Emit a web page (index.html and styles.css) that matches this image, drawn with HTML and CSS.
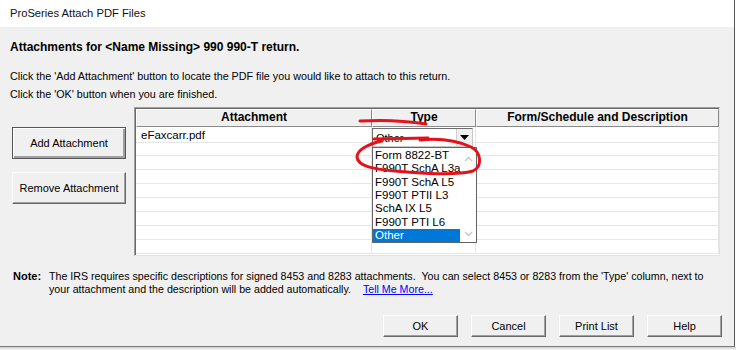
FILE: index.html
```html
<!DOCTYPE html>
<html>
<head>
<meta charset="utf-8">
<link rel="stylesheet" href="styles.css">
</head>
<body>
<div class="window">
  <div class="titlebar">ProSeries Attach PDF Files</div>
  <div class="client">
    <div class="heading">Attachments for &lt;Name Missing&gt; 990 990-T return.</div>
    <div class="instr">Click the 'Add Attachment' button to locate the PDF file you would like to attach to this return.</div>
    <div class="instr">Click the 'OK' button when you are finished.</div>
    <div class="main">
      <div class="sidebtns">
        <div class="btn btn-default side">Add Attachment</div>
        <div class="btn side">Remove Attachment</div>
      </div>
      <div class="grid">
        <div class="ghead">
          <div class="hcell">Attachment</div>
          <div class="hcell">Type</div>
          <div class="hcell">Form/Schedule and Description</div>
        </div>
        <div class="grow first"><div class="gcell">eFaxcarr.pdf</div><div class="gcell"></div><div class="gcell"></div></div>
        <div class="grow"><div class="gcell"></div><div class="gcell"></div><div class="gcell"></div></div>
        <div class="grow"><div class="gcell"></div><div class="gcell"></div><div class="gcell"></div></div>
        <div class="grow"><div class="gcell"></div><div class="gcell"></div><div class="gcell"></div></div>
        <div class="grow"><div class="gcell"></div><div class="gcell"></div><div class="gcell"></div></div>
        <div class="grow"><div class="gcell"></div><div class="gcell"></div><div class="gcell"></div></div>
        <div class="grow"><div class="gcell"></div><div class="gcell"></div><div class="gcell"></div></div>
        <div class="grow"><div class="gcell"></div><div class="gcell"></div><div class="gcell"></div></div>
        <div class="grow"><div class="gcell"></div><div class="gcell"></div><div class="gcell"></div></div>

        <div class="combo">
          <span class="combo-text">Other</span>
          <span class="combo-btn"><svg width="9" height="5" viewBox="0 0 9 5"><path d="M0 0H9L4.5 5Z" fill="#000"/></svg></span>
        </div>
        <div class="droplist">
          <div class="items">
            <div class="item">Form 8822-BT</div>
            <div class="item">F990T SchA L3a</div>
            <div class="item">F990T SchA L5</div>
            <div class="item">F990T PTII L3</div>
            <div class="item">SchA IX L5</div>
            <div class="item">F990T PTI L6</div>
            <div class="item sel">Other</div>
          </div>
          <div class="vscroll">
            <svg width="9" height="6" viewBox="0 0 9 6"><path d="M1 5L4.5 1.5L8 5" fill="none" stroke="#c8c8c8" stroke-width="1.3"/></svg>
            <svg width="9" height="6" viewBox="0 0 9 6"><path d="M1 1L4.5 4.5L8 1" fill="none" stroke="#c8c8c8" stroke-width="1.3"/></svg>
          </div>
        </div>
      </div>
    </div>
    <div class="note">
      <div class="note-label">Note:</div>
      <div class="note-text">The IRS requires specific descriptions for signed 8453 and 8283 attachments.&nbsp; You can select 8453 or 8283 from the 'Type' column, next to<br>your attachment and the description will be added automatically.<span class="link">Tell Me More...</span></div>
    </div>
    <div class="footer">
      <div class="btn foot">OK</div>
      <div class="btn foot">Cancel</div>
      <div class="btn foot">Print List</div>
      <div class="btn foot">Help</div>
    </div>
  </div>
</div>
<div class="below"></div>
<svg class="annot" width="736" height="350" viewBox="0 0 736 350">
  <path d="M360 121 Q395 119 426 124" fill="none" stroke="#e5121b" stroke-width="3" stroke-linecap="round"/>
  <path d="M374 139 L428 138" fill="none" stroke="#e5121b" stroke-width="3" stroke-linecap="round"/>
  <path d="M382 141 C368 144 357 150 357 157 C358 166 372 169 395 171 C420 173 455 176 473 171 C483 166 481 152 471 147 C458 141 440 138 420 140" fill="none" stroke="#e5121b" stroke-width="3" stroke-linecap="round"/>
</svg>
</body>
</html>
```

FILE: styles.css
```css
* { box-sizing: border-box; }
html, body { margin: 0; padding: 0; }
body {
  width: 736px;
  height: 350px;
  overflow: hidden;
  background: #ffffff;
  font-family: "Liberation Sans", Arial, sans-serif;
  font-size: 11px;
  color: #000;
  position: relative;
}
.window {
  width: 735px;
  height: 347px;
  display: flex;
  flex-direction: column;
  border-right: 1px solid #555;
  border-bottom: 1px solid #7a7a7a;
}
.titlebar {
  height: 27px;
  background: #fff;
  padding-left: 10px;
  font-size: 11.2px;
  line-height: 27px;
  padding-bottom: 2px;
  flex: none;
  color: #111;
}
.client {
  flex: 1;
  background: #f0f0f0;
  display: flex;
  flex-direction: column;
}
.heading {
  margin: 13px 0 0 10px;
  font-weight: bold;
  font-size: 12px;
  line-height: 14px;
}
.heading + .instr { margin-top: 13px; }
.instr {
  margin-left: 10px;
  line-height: 18px;
  font-size: 10.75px;
}
.main {
  margin-top: 4px;
  display: flex;
  gap: 8px;
  padding-left: 12px;
}
.sidebtns {
  width: 114px;
  padding-top: 20px;
  display: flex;
  flex-direction: column;
  gap: 13px;
}
.btn {
  background: #f0f0f0;
  border: 1px solid;
  border-color: #ffffff #696969 #696969 #ffffff;
  box-shadow: inset -1px -1px 0 #a0a0a0;
  display: flex;
  align-items: center;
  justify-content: center;
}
.btn.side { height: 32px; }
.btn-default {
  outline: 1px solid #555;
  outline-offset: -1px;
  border-color: #555;
  box-shadow: inset 1px 1px 0 #fff, inset -2px -2px 0 #a0a0a0;
}
.grid {
  width: 586px;
  height: 149px;
  border: 1px solid;
  border-color: #a0a0a0 #e3e3e3 #e3e3e3 #a0a0a0;
  box-shadow: inset 1px 1px 0 #696969;
  background: #fff;
  position: relative;
  overflow: hidden;
  padding: 1px 0 0 1px;
}
.ghead, .grow {
  display: grid;
  grid-template-columns: 236px 104px 243px;
}
.hcell {
  height: 18px;
  background: #f0f0f0;
  border: 1px solid;
  border-color: #ffffff #8a8a8a #8a8a8a #ffffff;
  font-weight: bold;
  font-size: 12px;
  text-align: center;
  line-height: 15px;
}
.grow { height: 14px; }
.grow.first { height: 15px; }
.gcell {
  border-bottom: 1px solid #e6e6e6;
  border-right: 1px solid #e6e6e6;
  padding-left: 5px;
  padding-top: 2px;
  line-height: 13px;
  font-size: 11.5px;
}
.combo {
  position: absolute;
  left: 237px;
  top: 20px;
  width: 101px;
  height: 19px;
  background: #fff;
  border: 1px solid;
  border-color: #6d6d6d #c8c8c8 #c8c8c8 #6d6d6d;
  display: flex;
  align-items: center;
}
.combo-text { flex: 1; padding-left: 3px; font-size: 11px; }
.combo-btn {
  width: 16px;
  height: 17px;
  background: #f0f0f0;
  border-left: 1px solid #d0d0d0;
  display: flex;
  align-items: center;
  justify-content: center;
}
.droplist {
  position: absolute;
  left: 237px;
  top: 39px;
  width: 105px;
  height: 96px;
  background: #fff;
  border: 1px solid #646464;
  display: flex;
}
.items { flex: 1; padding-top: 1px; }
.item {
  height: 13.35px;
  line-height: 13.35px;
  padding-left: 2px;
  font-size: 11.5px;
  white-space: nowrap;
}
.item.sel { background: #0078d7; color: #fff; }
.vscroll {
  width: 17px;
  display: flex;
  flex-direction: column;
  justify-content: space-between;
  align-items: center;
  padding: 8px 0 5px;
}
.note {
  margin-top: 14px;
  display: flex;
  line-height: 13px;
}
.note-label {
  width: 49px;
  padding-left: 13px;
  font-weight: bold;
}
.note-text { font-size: 10.66px; }
.link {
  color: #0000ff;
  text-decoration: underline;
  margin-left: 12px;
}
.footer {
  margin-top: auto;
  margin-bottom: 9px;
  display: flex;
  justify-content: flex-end;
  gap: 13px;
  padding-right: 12px;
}
.btn.foot { width: 75px; height: 22px; }
.below {
  height: 3px;
  background: linear-gradient(#cfcfcf, #f4f4f4);
}
.annot {
  position: absolute;
  left: 0;
  top: 0;
  pointer-events: none;
}
```
